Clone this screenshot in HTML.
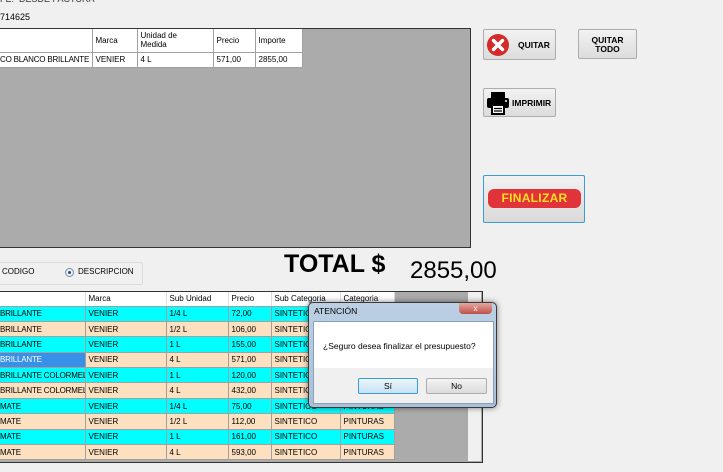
<!DOCTYPE html>
<html><head><meta charset="utf-8"><style>
body{margin:0;width:723px;height:472px;background:#f0f0f0;font-family:"Liberation Sans",sans-serif;font-size:8px;position:relative;overflow:hidden;color:#000}
.a{position:absolute}
.btn{position:absolute;border:1px solid #adadad;border-radius:2px;background:linear-gradient(#f2f2f2,#dcdcdc);font-weight:bold;font-size:8.5px;box-sizing:border-box}
table{border-collapse:collapse;position:absolute;table-layout:fixed}
td{padding:0 0 0 3px;white-space:nowrap;overflow:hidden;border-right:1px solid #a0a0a0;border-bottom:1px solid #a0a0a0;font-size:8px;box-sizing:border-box}
td:first-child{padding-left:0;letter-spacing:-0.2px}
</style></head><body>
<div class="a" style="left:0;top:-6px;font-size:9px;color:#333">FE: &nbsp;DESDE FACTURA</div>
<div class="a" style="left:0;top:12px;font-size:9px">714625</div>

<!-- top grid -->
<div class="a" style="left:-2px;top:28px;width:471px;height:218px;background:#ababab;border:1px solid #333"></div>
<table style="left:0;top:29px;width:302px">
<colgroup><col style="width:92px"><col style="width:45px"><col style="width:76px"><col style="width:42px"><col style="width:47px"></colgroup>
<tr style="height:23px;background:#fff"><td></td><td>Marca</td><td style="line-height:9px">Unidad de<br>Medida</td><td>Precio</td><td>Importe</td></tr>
<tr style="height:15px;background:#fff"><td>CO BLANCO BRILLANTE</td><td>VENIER</td><td>4 L</td><td>571,00</td><td>2855,00</td></tr>
</table>

<!-- buttons -->
<div class="btn" style="left:483px;top:29px;width:73px;height:31px">
<svg class="a" style="left:2px;top:3px" width="24" height="24"><circle cx="12" cy="12" r="11" fill="#d42a2a"/><path d="M7.5 7.5l9 9M16.5 7.5l-9 9" stroke="#fff" stroke-width="3.4" stroke-linecap="round"/></svg>
<span class="a" style="left:34px;top:10px">QUITAR</span></div>
<div class="btn" style="left:578px;top:29px;width:59px;height:30px;text-align:center;line-height:9px;padding-top:6px">QUITAR<br>TODO</div>
<div class="btn" style="left:483px;top:88px;width:73px;height:29px">
<svg class="a" style="left:2px;top:2px" width="24" height="25"><rect x="5" y="1" width="14" height="6" fill="#000"/><rect x="1" y="7" width="22" height="10" rx="2" fill="#000"/><rect x="5" y="13" width="14" height="11" fill="#000"/><rect x="7" y="15" width="10" height="7" fill="#fff"/><path d="M8 17.5h8M8 20h8" stroke="#000" stroke-width="1.2"/><circle cx="20" cy="10" r="1" fill="#fff"/></svg>
<span class="a" style="left:28px;top:9px">IMPRIMIR</span></div>
<div class="btn" style="left:483px;top:175px;width:102px;height:48px;border:1px solid #3c9cd6;background:linear-gradient(#f2f2f2,#dadada)">
<div class="a" style="left:4px;top:13px;width:93px;height:19px;background:#e0333a;border-radius:6px;color:#ffe020;font-size:12px;font-weight:bold;text-align:center;line-height:19px;letter-spacing:0.3px">FINALIZAR</div></div>

<!-- radio group -->
<div class="a" style="left:-2px;top:262px;width:143px;height:21px;border:1px solid #dcdcdc;border-radius:2px"></div>
<div class="a" style="left:2px;top:267px;font-size:8px">CODIGO</div>
<div class="a" style="left:65px;top:268px;width:7px;height:7px;border-radius:50%;border:1px solid #7a8a9a;background:#eaf1f8"><div class="a" style="left:2px;top:2px;width:3px;height:3px;border-radius:50%;background:#1c4e86"></div></div>
<div class="a" style="left:78px;top:267px;font-size:8px">DESCRIPCION</div>

<div class="a" style="left:284px;top:250px;font-size:25px;font-weight:bold">TOTAL $</div>
<div class="a" style="left:410px;top:257px;font-size:24px">2855,00</div>

<!-- bottom grid -->
<div class="a" style="left:-2px;top:291px;width:483px;height:170px;background:#ababab;border:1px solid #333"></div>
<div class="a" style="left:468px;top:292px;width:13px;height:169px;background:#f0f0f0"></div>
<table style="left:0;top:292px;width:394px">
<colgroup><col style="width:85px"><col style="width:81px"><col style="width:62px"><col style="width:43px"><col style="width:69px"><col style="width:54px"></colgroup>
<tr style="height:14px;background:#fff"><td style="border-right-color:#ddd"></td><td style="border-right-color:#ddd">Marca</td><td style="border-right-color:#ddd">Sub Unidad</td><td style="border-right-color:#ddd">Precio</td><td style="border-right-color:#ddd">Sub Categoria</td><td style="border-right-color:#ddd">Categoria</td></tr>
<tr style="height:15.4px;background:#0ff"><td>BRILLANTE</td><td>VENIER</td><td>1/4 L</td><td>72,00</td><td>SINTETICO</td><td>PINTURAS</td></tr>
<tr style="height:15.4px;background:#fde0bf"><td>BRILLANTE</td><td>VENIER</td><td>1/2 L</td><td>106,00</td><td>SINTETICO</td><td>PINTURAS</td></tr>
<tr style="height:15.4px;background:#0ff"><td>BRILLANTE</td><td>VENIER</td><td>1 L</td><td>155,00</td><td>SINTETICO</td><td>PINTURAS</td></tr>
<tr style="height:15.4px;background:#fde0bf"><td style="background:#3890e8;color:#fff">BRILLANTE</td><td>VENIER</td><td>4 L</td><td>571,00</td><td>SINTETICO</td><td>PINTURAS</td></tr>
<tr style="height:15.4px;background:#0ff"><td>BRILLANTE COLORMEL</td><td>VENIER</td><td>1 L</td><td>120,00</td><td>SINTETICO</td><td>PINTURAS</td></tr>
<tr style="height:15.4px;background:#fde0bf"><td>BRILLANTE COLORMEL</td><td>VENIER</td><td>4 L</td><td>432,00</td><td>SINTETICO</td><td>PINTURAS</td></tr>
<tr style="height:15.4px;background:#0ff"><td>MATE</td><td>VENIER</td><td>1/4 L</td><td>75,00</td><td>SINTETICO</td><td>PINTURAS</td></tr>
<tr style="height:15.4px;background:#fde0bf"><td>MATE</td><td>VENIER</td><td>1/2 L</td><td>112,00</td><td>SINTETICO</td><td>PINTURAS</td></tr>
<tr style="height:15.4px;background:#0ff"><td>MATE</td><td>VENIER</td><td>1 L</td><td>161,00</td><td>SINTETICO</td><td>PINTURAS</td></tr>
<tr style="height:15.4px;background:#fde0bf"><td>MATE</td><td>VENIER</td><td>4 L</td><td>593,00</td><td>SINTETICO</td><td>PINTURAS</td></tr>
</table>

<!-- dialog -->
<div class="a" style="left:308px;top:302px;width:189px;height:106px;background:linear-gradient(#bcd0e4,#a8c0d8);border:1px solid #3a3a3a;border-radius:5px;box-sizing:border-box;box-shadow:0 0 6px rgba(0,0,0,.5)">
<div class="a" style="left:5px;top:3px;font-size:8.5px">ATENCIÓN</div>
<div class="a" style="left:150px;top:0;width:33px;height:11px;background:linear-gradient(#e4a8a0,#c0504a);border-radius:0 0 4px 4px;color:#fff;font-size:8px;text-align:center;line-height:11px">x</div>
<div class="a" style="left:4px;top:18px;width:179px;height:47px;background:#fff;border:1px solid #8aa0b8"><div class="a" style="left:9px;top:19px;font-size:8.5px">¿Seguro desea finalizar el presupuesto?</div></div>
<div class="a" style="left:4px;top:65px;width:179px;height:35px;background:#f0f0f0;border:1px solid #8aa0b8;border-top:0">
<div class="btn" style="left:44px;top:10px;width:60px;height:16px;border-color:#3c9cd6;font-weight:normal;text-align:center;line-height:14px;background:linear-gradient(#eaf5fc,#c8e2f4)">Sí</div>
<div class="btn" style="left:112px;top:10px;width:61px;height:16px;font-weight:normal;text-align:center;line-height:14px">No</div>
</div></div>
</body></html>
